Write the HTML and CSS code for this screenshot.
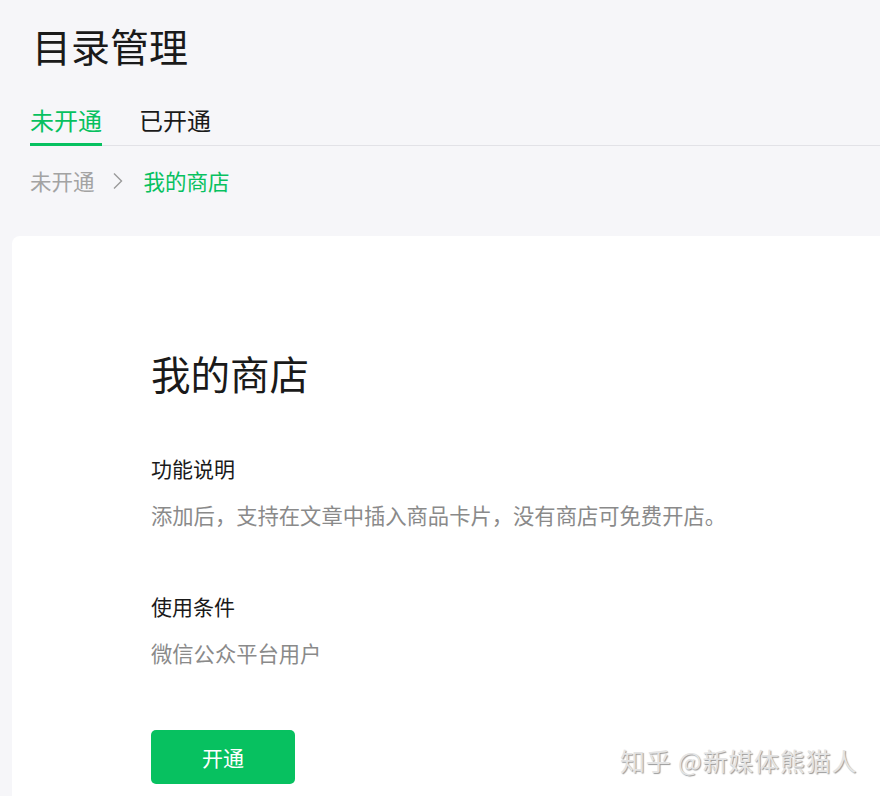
FILE: index.html
```html
<!DOCTYPE html>
<html lang="zh-CN">
<head>
<meta charset="utf-8">
<title>目录管理</title>
<link rel="stylesheet" href="styles.css">
</head>
<body>
<div class="page">
  <header class="head">
    <h1 class="title">目录管理</h1>
    <nav class="tabs">
      <span class="tab active">未开通</span>
      <span class="tab">已开通</span>
    </nav>
    <div class="crumbs">
      <span class="crumb">未开通</span>
      <svg class="chev" width="12" height="18" viewBox="0 0 12 18"><path d="M2 1.5 L9.5 9 L2 16.5" fill="none" stroke="#9a9a9a" stroke-width="1.4"/></svg>
      <span class="crumb current">我的商店</span>
    </div>
  </header>
  <main class="card">
    <h2 class="card-title">我的商店</h2>
    <section class="sec">
      <div class="label">功能说明</div>
      <div class="desc">添加后，支持在文章中插入商品卡片，没有商店可免费开店。</div>
    </section>
    <section class="sec sec2">
      <div class="label">使用条件</div>
      <div class="desc">微信公众平台用户</div>
    </section>
    <button class="btn">开通</button>
  </main>
  <div class="watermark">知乎 @新媒体熊猫人</div>
</div>
</body>
</html>
```
FILE: styles.css
```css
* { box-sizing: border-box; }
html, body { margin: 0; padding: 0; }
body {
  background: #f6f6f9;
  font-family: "Noto Sans CJK SC", "Noto Sans", sans-serif;
  color: #1a1a1a;
  overflow: hidden;
}
.page { position: relative; height: 796px; overflow: hidden; }
.head { padding-left: 30px; }
.title {
  margin: 0;
  padding-top: 19px;
  padding-left: 2px;
  font-size: 39px;
  line-height: 52px;
  font-weight: 400;
  color: #1a1a1a;
}
.tabs {
  display: flex;
  gap: 37px;
  margin-top: 32px;
  border-bottom: 1px solid #e2e2e7;
}
.tab {
  font-size: 24px;
  line-height: 34px;
  padding-bottom: 6px;
  border-bottom: 3px solid transparent;
  margin-bottom: -1px;
  color: #1a1a1a;
}
.tab.active { color: #07c160; border-bottom-color: #07c160; }
.crumbs {
  display: flex;
  align-items: center;
  margin-top: 20px;
  height: 30px;
}
.crumb { font-size: 21.5px; line-height: 30px; color: #a3a3a3; }
.crumb.current { color: #07c160; }
.chev { margin: 0 20px 0 17px; }
.card {
  margin: 40px -20px 0 12px;
  background: #fff;
  border-radius: 8px 0 0 0;
  padding: 112px 0 0 139px;
  height: 600px;
}
.card-title {
  margin: 0;
  font-size: 39.5px;
  line-height: 50px;
  font-weight: 400;
  color: #1a1a1a;
}
.sec { margin-top: 55px; }
.sec2 { margin-top: 61px; }
.label { font-size: 21px; line-height: 30px; color: #1a1a1a; }
.desc { margin-top: 17px; font-size: 21.3px; line-height: 30px; color: #8a8a8a; }
.btn {
  display: block;
  margin-top: 62px;
  width: 144px;
  height: 54px;
  border: 0;
  border-radius: 5px;
  background: #07c160;
  color: #fff;
  font-family: inherit;
  font-size: 21px;
}
.watermark {
  position: absolute;
  left: 620px;
  top: 743px;
  font-size: 25px;
  line-height: 34px;
  color: #e4e4e4;
  text-shadow: 1px 1px 1px #9a9a9a;
  letter-spacing: 0.8px;
}
```
